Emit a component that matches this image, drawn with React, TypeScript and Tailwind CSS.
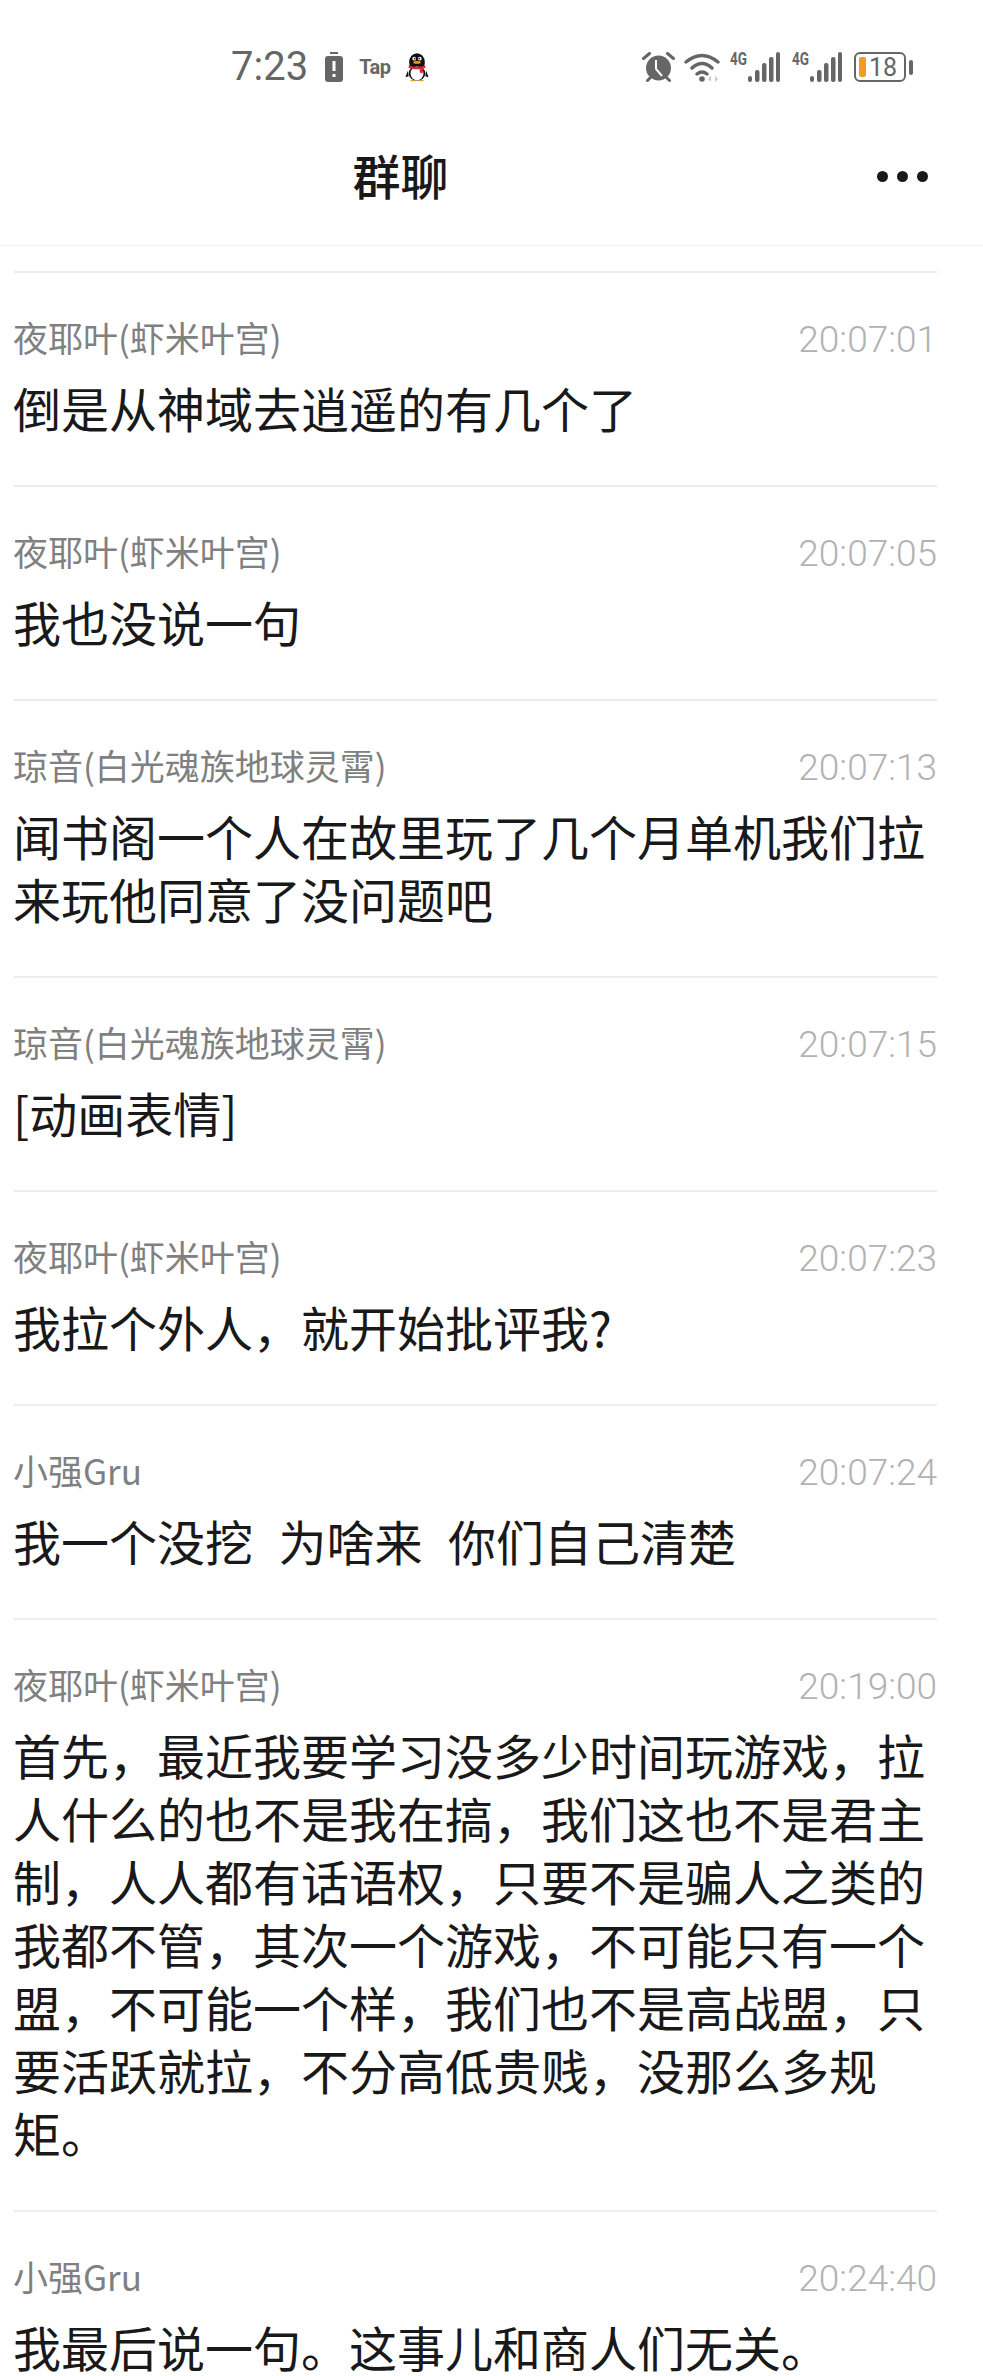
const cjk = "font-['Noto_Sans_CJK_SC','Noto_Sans',sans-serif]";

const messages = [
  { name: "夜耶叶(虾米叶宫)", time: "20:07:01", lines: ["倒是从神域去逍遥的有几个了"] },
  { name: "夜耶叶(虾米叶宫)", time: "20:07:05", lines: ["我也没说一句"] },
  { name: "琼音(白光魂族地球灵霄)", time: "20:07:13", lines: ["闻书阁一个人在故里玩了几个月单机我们拉", "来玩他同意了没问题吧"] },
  { name: "琼音(白光魂族地球灵霄)", time: "20:07:15", lines: ["[动画表情]"] },
  { name: "夜耶叶(虾米叶宫)", time: "20:07:23", lines: ["我拉个外人，就开始批评我?"] },
  { name: "小强Gru", time: "20:07:24", lines: ["我一个没挖  为啥来  你们自己清楚"] },
  {
    name: "夜耶叶(虾米叶宫)",
    time: "20:19:00",
    lines: [
      "首先，最近我要学习没多少时间玩游戏，拉",
      "人什么的也不是我在搞，我们这也不是君主",
      "制，人人都有话语权，只要不是骗人之类的",
      "我都不管，其次一个游戏，不可能只有一个",
      "盟，不可能一个样，我们也不是高战盟，只",
      "要活跃就拉，不分高低贵贱，没那么多规",
      "矩。",
    ],
  },
  { name: "小强Gru", time: "20:24:40", lines: ["我最后说一句。这事儿和商人们无关。"] },
];

function Signal() {
  return (
    <svg width="50" height="32" viewBox="0 0 50 32" fill="#666">
      <text x="0" y="14" fontSize="18" fontWeight="700" fontFamily="Roboto" textLength="17" lengthAdjust="spacingAndGlyphs">4G</text>
      <rect x="18" y="25" width="4" height="6" rx="2" />
      <rect x="25" y="19" width="4.500" height="12" rx="2" />
      <rect x="32" y="12" width="4.500" height="19" rx="2" />
      <rect x="39" y="6" width="4.500" height="25" rx="2" />
      <rect x="46" y="1" width="4" height="30" rx="2" />
    </svg>
  );
}

function StatusBar() {
  return (
    <div className="h-[110px] flex items-center pt-[24px]">
      <div className="ml-[231px] flex items-center">
        <span className="text-[40px] leading-none text-[#666] font-['Roboto',sans-serif]">7:23</span>
        <svg className="ml-[17px]" width="18" height="30" viewBox="0 0 18 30" fill="#666">
          <rect x="5" y="0" width="8" height="2" />
          <rect x="0" y="4" width="18" height="26" rx="3" />
          <rect x="7.500" y="9" width="3" height="10" fill="#fff" />
          <rect x="7.500" y="22" width="3" height="3" fill="#fff" />
        </svg>
        <span className="ml-[16px] w-[32px] text-[20px] font-bold leading-none tracking-tight text-[#666] font-['Roboto',sans-serif]">Tap</span>
        <svg className="ml-[14px]" width="24" height="32" viewBox="0 0 26 32">
          <ellipse cx="13" cy="11" rx="8.500" ry="10" fill="#111" />
          <ellipse cx="13" cy="23" rx="9" ry="8" fill="#111" />
          <ellipse cx="13" cy="23" rx="7" ry="7.500" fill="#fff" />
          <path d="M3 20 L0.500 27 L4 26 Z M23 20 L25.500 27 L22 26 Z" fill="#111" />
          <circle cx="10" cy="7" r="2" fill="#fff" />
          <circle cx="16" cy="7" r="2" fill="#fff" />
          <circle cx="10.500" cy="7" r="0.900" fill="#111" />
          <circle cx="15.500" cy="7" r="0.900" fill="#111" />
          <ellipse cx="13" cy="11" rx="4" ry="1.600" fill="#e8a020" />
          <path d="M4 14 Q13 17.500 22 14 L22 17 Q13 20 4 17 Z M16 18 L20 18 L19 23 L16 22 Z" fill="#d9282f" />
          <path d="M6 30 h5 v1.500 h-5 Z M15 30 h5 v1.500 h-5 Z" fill="#e8a020" />
        </svg>
      </div>
      <div className="ml-auto mr-[70px] flex items-center">
        <svg width="33" height="30" viewBox="0 0 33 30" fill="#666">
          <circle cx="16.500" cy="16" r="12.500" />
          <path d="M14 8 v9 l6 7" stroke="#fff" strokeWidth="2" fill="none" />
          <path d="M1.500 6.500 L7.500 1.500 M31.500 6.500 L25.500 1.500" stroke="#666" strokeWidth="3" strokeLinecap="round" />
          <path d="M5.500 28.500 l3 -3 M27.500 28.500 l-3 -3" stroke="#666" strokeWidth="3" strokeLinecap="round" />
        </svg>
        <svg className="ml-[9px]" width="37" height="30" viewBox="0 0 37 30" fill="none" stroke="#666" strokeWidth="3.500" strokeLinecap="round">
          <path d="M2 10 Q18 -3 34 10" />
          <path d="M8 16 Q18 7 28 16" />
          <path d="M13 22 Q18 18 23 22" />
          <circle cx="18" cy="27" r="2.800" fill="#666" stroke="none" />
          <path d="M27 23.500 l-3 3.500 l3 3 Z M31 23.500 l3 3.500 l-3 3 Z" fill="#ccc" stroke="none" />
        </svg>
        <div className="ml-[9px] flex"><Signal /></div>
        <div className="ml-[12px] flex"><Signal /></div>
        <div className="ml-[12px] relative w-[52px] h-[30px] rounded-[6px] border-[2.500px] border-[#666] flex items-center justify-end pr-[7px]">
          <div className="absolute left-[3px] top-[3px] bottom-[3px] w-[7px] rounded-[2px] bg-[#f59a23]" />
          <span className="text-[25px] leading-none text-[#666] font-['Roboto',sans-serif]">18</span>
        </div>
        <div className="ml-[3px] w-[4px] h-[15px] rounded-[2px] bg-[#666]" />
      </div>
    </div>
  );
}

function Header() {
  return (
    <div className="h-[136px] relative flex items-center justify-center pr-[182px] pb-[7px] border-b border-[#f4f4f4]">
      <h1 className={`text-[48px] leading-none font-medium text-[#191919] ${cjk}`}>群聊</h1>
      <div className="absolute right-[55px] top-[61px] flex gap-[9px]">
        <div className="w-[11px] h-[11px] rounded-full bg-[#191919]" />
        <div className="w-[11px] h-[11px] rounded-full bg-[#191919]" />
        <div className="w-[11px] h-[11px] rounded-full bg-[#191919]" />
      </div>
    </div>
  );
}

export default function App() {
  return (
    <div className={`w-[983px] h-[2376px] overflow-hidden bg-white ${cjk}`}>
      <StatusBar />
      <Header />
      <div className="pt-[25px] pl-[14px] pr-[46px]">
        {messages.map((m, i) => (
          <div key={i} className="border-t-2 border-[#ececec] pt-[43px] pb-[45px]">
            <div className="flex items-center justify-between h-[46px]">
              <span className="-ml-px pb-[5px] text-[35px] leading-none text-[#808080]">{m.name}</span>
              <span className="text-[37px] leading-none text-[#b2b2b2] font-['Roboto',sans-serif] font-light">{m.time}</span>
            </div>
            <div className="-ml-px mt-[14px] pb-px text-[48px] leading-[63px] text-[#191919] [word-spacing:2px]">
              {m.lines.map((line, j) => (
                <div key={j} className="whitespace-pre">{line}</div>
              ))}
            </div>
          </div>
        ))}
      </div>
    </div>
  );
}
